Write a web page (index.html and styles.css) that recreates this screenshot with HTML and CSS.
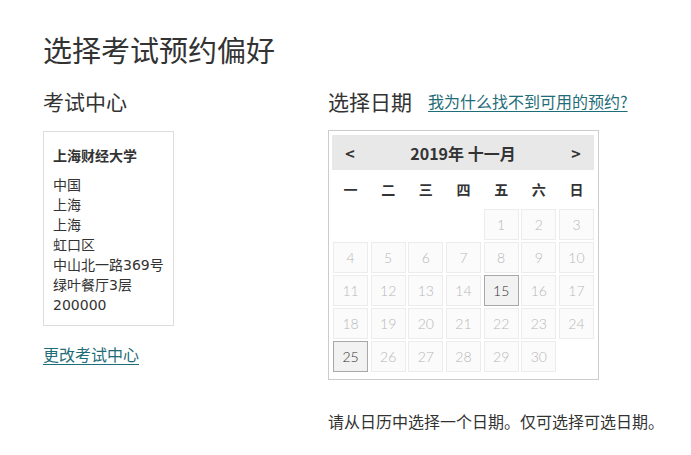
FILE: index.html
```html
<!DOCTYPE html>
<html lang="zh-CN">
<head>
<meta charset="utf-8">
<title>选择考试预约偏好</title>
<link rel="stylesheet" href="styles.css">
</head>
<body>
<main class="page">
  <h1 class="title">选择考试预约偏好</h1>
  <div class="columns">
    <section class="col-left">
      <h2 class="section-head">考试中心</h2>
      <div class="center-box">
        <div class="center-name">上海财经大学</div>
        <div class="center-addr">
          <div>中国</div>
          <div>上海</div>
          <div>上海</div>
          <div>虹口区</div>
          <div>中山北一路369号</div>
          <div>绿叶餐厅3层</div>
          <div>200000</div>
        </div>
      </div>
      <a class="link change-link" href="#">更改考试中心</a>
    </section>
    <section class="col-right">
      <div class="date-head">
        <h2 class="section-head">选择日期</h2>
        <a class="link why-link" href="#">我为什么找不到可用的预约?</a>
      </div>
      <div class="calendar">
        <div class="cal-header">
          <span class="cal-nav">&lt;</span>
          <span class="cal-title">2019年 十一月</span>
          <span class="cal-nav">&gt;</span>
        </div>
        <div class="cal-weekdays">
          <span>一</span><span>二</span><span>三</span><span>四</span><span>五</span><span>六</span><span>日</span>
        </div>
        <div class="cal-days">
          <span class="empty"></span><span class="empty"></span><span class="empty"></span><span class="empty"></span>
          <span class="day">1</span><span class="day">2</span><span class="day">3</span>
          <span class="day">4</span><span class="day">5</span><span class="day">6</span><span class="day">7</span><span class="day">8</span><span class="day">9</span><span class="day">10</span>
          <span class="day">11</span><span class="day">12</span><span class="day">13</span><span class="day">14</span><span class="day active">15</span><span class="day">16</span><span class="day">17</span>
          <span class="day">18</span><span class="day">19</span><span class="day">20</span><span class="day">21</span><span class="day">22</span><span class="day">23</span><span class="day">24</span>
          <span class="day active">25</span><span class="day">26</span><span class="day">27</span><span class="day">28</span><span class="day">29</span><span class="day">30</span>
        </div>
      </div>
      <p class="hint">请从日历中选择一个日期。仅可选择可选日期。</p>
    </section>
  </div>
</main>
</body>
</html>
```

FILE: styles.css
```css
html, body {
  margin: 0;
  padding: 0;
  background: #ffffff;
}

body {
  font-family: "Noto Sans CJK SC", "Noto Sans", sans-serif;
  color: #333333;
}

.page {
  padding: 32px 0 0 43px;
}

.title {
  margin: 0;
  font-size: 29px;
  line-height: 35px;
  font-weight: 400;
  color: #333333;
}

.columns {
  display: grid;
  grid-template-columns: 285px auto;
  margin-top: 22px;
}

.section-head {
  margin: 0;
  font-size: 21px;
  line-height: 25px;
  font-weight: 400;
  color: #333333;
}

.center-box {
  display: inline-block;
  margin-top: 17px;
  border: 1px solid #dddddd;
  padding: 13px 9px 10px 9px;
  font-size: 14px;
  line-height: 20px;
}

.center-name {
  font-weight: 700;
  margin-bottom: 10px;
}

.center-addr {
  font-family: "DejaVu Sans", "Noto Sans CJK SC", sans-serif;
}

.link {
  color: #1f6d78;
  text-decoration: underline;
  text-underline-offset: 3px;
  text-decoration-thickness: 1px;
}

.change-link {
  display: block;
  width: max-content;
  margin-top: 17px;
  font-size: 16px;
  line-height: 22px;
}

.col-left {
  display: flex;
  flex-direction: column;
  align-items: flex-start;
}

.date-head {
  display: flex;
  align-items: center;
  gap: 16px;
}

.why-link {
  font-size: 16px;
  line-height: 25px;
}

.calendar {
  width: 261px;
  margin-top: 16px;
  border: 1px solid #cccccc;
  padding: 4px 4px 7px 4px;
}

.cal-header {
  display: flex;
  align-items: center;
  justify-content: space-between;
  height: 35px;
  margin-left: -1px;
  background: #e8e8e8;
}

.cal-nav {
  width: 36px;
  text-align: center;
  font-size: 16px;
  font-weight: 700;
  color: #333333;
}

.cal-title {
  font-size: 16px;
  font-weight: 700;
  color: #333333;
}

.cal-weekdays {
  display: grid;
  grid-template-columns: repeat(7, 1fr);
  column-gap: 2.67px;
  height: 37px;
  align-items: center;
  margin-bottom: 2px;
  font-size: 14px;
  font-weight: 700;
  text-align: center;
  color: #333333;
}

.cal-days {
  display: grid;
  grid-template-columns: repeat(7, 1fr);
  grid-auto-rows: 31px;
  column-gap: 2.67px;
  row-gap: 2px;
}

.day {
  display: flex;
  align-items: center;
  justify-content: center;
  box-sizing: border-box;
  border: 1px solid #ececec;
  background: #fbfbfb;
  font-family: "Lato", "Noto Sans CJK SC", sans-serif;
  font-size: 14px;
  font-weight: 300;
  color: #b8b8b8;
}

.day.active {
  border-color: #a8a8a8;
  background: #f2f2f2;
  color: #333333;
}

.hint {
  margin: 31px 0 0 0;
  font-size: 16px;
  line-height: 20px;
  color: #333333;
}
```
